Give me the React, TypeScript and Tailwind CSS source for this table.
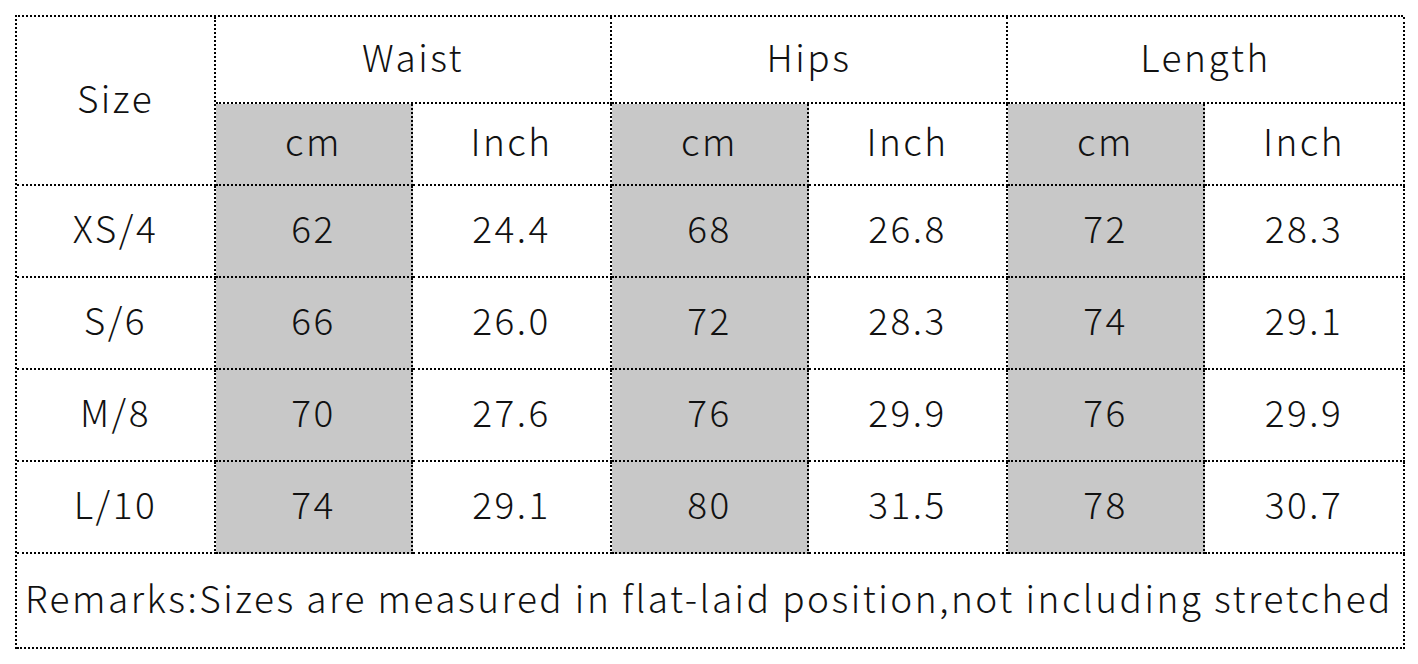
const rows = [
  ["XS/4", "62", "24.4", "68", "26.8", "72", "28.3"],
  ["S/6", "66", "26.0", "72", "28.3", "74", "29.1"],
  ["M/8", "70", "27.6", "76", "29.9", "76", "29.9"],
  ["L/10", "74", "29.1", "80", "31.5", "78", "30.7"],
];

const cell = "flex items-center justify-center pb-[7px] border-r-2 border-b-2 border-dotted border-black";

export default function App() {
  return (
    <div className="w-[1418px] h-[664px] bg-white pt-[15px] pl-[15px] text-[#111] tracking-[2.5px] font-light" style={{ fontFamily: '"Noto Sans CJK KR", "Noto Sans", sans-serif' }}>
      <div className="grid w-[1388px] grid-cols-[199px_197px_199px_197px_199px_197px_200px] grid-rows-[87px_82px_92px_92px_92px_92px_95px] border-l-2 border-t-2 border-dotted border-black text-[37px] leading-none">
        <div className={`${cell} row-span-2`}>Size</div>
        <div className={`${cell} col-span-2`}>Waist</div>
        <div className={`${cell} col-span-2`}>Hips</div>
        <div className={`${cell} col-span-2`}>Length</div>
        {[0, 1, 2].map((i) => (
          <>
            <div key={`c${i}`} className={`${cell} bg-[#c8c8c8]`}>cm</div>
            <div key={`i${i}`} className={cell}>Inch</div>
          </>
        ))}
        {rows.map((r) =>
          r.map((v, j) => (
            <div key={r[0] + j} className={`${cell} ${j % 2 === 1 ? "bg-[#c8c8c8]" : ""}`}>
              {v}
            </div>
          ))
        )}
        <div className={`${cell} col-span-7 justify-start pl-[8px]`}>
          Remarks:Sizes are measured in flat-laid position,not including stretched
        </div>
      </div>
    </div>
  );
}
